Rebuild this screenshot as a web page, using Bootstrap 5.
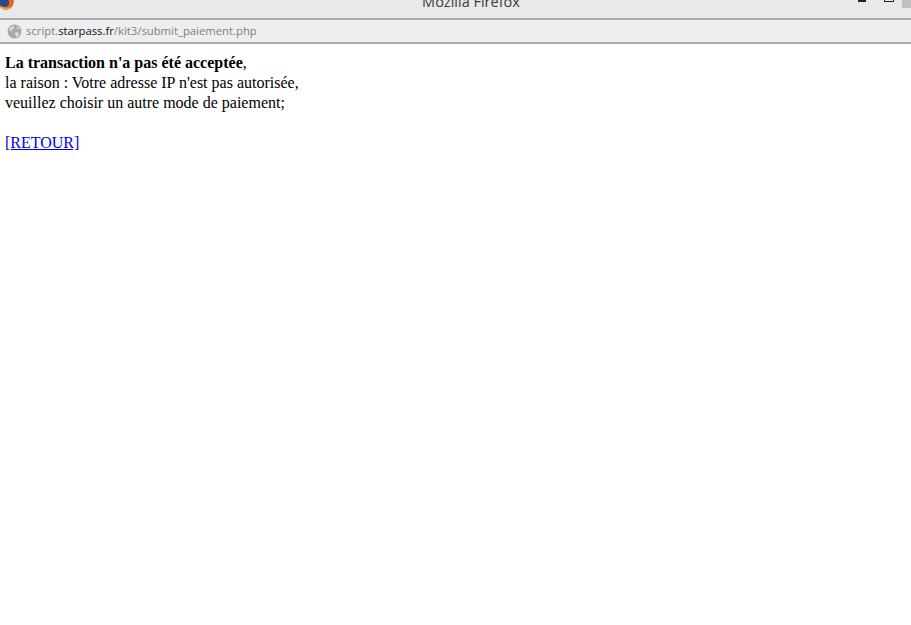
<!DOCTYPE html>
<html lang="fr">
<head>
    <meta charset="UTF-8">
    <meta name="viewport" content="width=device-width, initial-scale=1.0">
    <title>Mozilla Firefox</title>
    <link rel="stylesheet" href="https://cdn.jsdelivr.net/npm/bootstrap@5.3.0/dist/css/bootstrap.min.css">
    <style>
        body {
            background-color: #fff;
            overflow: hidden;
        }
        .win-title {
            height: 18px;
            background-color: #e9e9e9;
            overflow: hidden;
        }
        .win-logo {
            top: -7px;
            left: -3px;
        }
        .win-name {
            font: 14.5px/1 "Open Sans", "Liberation Sans", sans-serif;
            color: #3c3c3c;
            margin-top: -5px;
            margin-left: 31px;
        }
        .win-btns {
            top: 0;
            right: 0;
        }
        .btn-min {
            width: 8px;
            height: 2px;
            background-color: #222;
            margin-right: 18px;
        }
        .btn-max {
            width: 10px;
            height: 2px;
            border: 1px solid #222;
            border-top: 0;
            margin-right: 8px;
        }
        .btn-close-box {
            width: 9px;
            height: 8px;
            background-color: #c0c0c0;
        }
        .url-bar {
            height: 26px;
            background-color: #eeeeee;
            border-top: 2px solid #a4abb2;
            border-bottom: 2px solid #a4abb2;
            padding-left: 7px;
            font: 11.3px/1 "Open Sans", "Liberation Sans", sans-serif;
            color: #7d7d7d;
        }
        .url-host {
            color: #111;
        }
        .page-body {
            font: 16px/20px "Liberation Serif", serif;
            color: #000;
            padding: 9px 5px 0;
        }
        .page-body a {
            color: #0000ee;
        }
    </style>
</head>
<body>
    <div class="win-title position-relative d-flex justify-content-center">
        <svg class="win-logo position-absolute" width="18" height="18" viewBox="0 0 18 18">
            <circle cx="9" cy="9" r="7.5" fill="#2a4a8c"/>
            <path d="M9 1.5a7.5 7.5 0 1 1-7.3 9.2c1 2.4 3.4 4 6 3.7 3-.3 4.6-2.6 4.4-5-.2-2-1.6-3.4-3.100-4 .8-1.500 0-3 0-3.900z" fill="#e8641b"/>
            <path d="M2 12c1.500 3 4 4.500 7 4.500s5-1 6.500-3.500c-2 1.500-4 2-6.500 1.500S4 13 2 12z" fill="#f3a21f"/>
        </svg>
        <span class="win-name">Mozilla Firefox</span>
        <div class="win-btns position-absolute d-flex align-items-start">
            <div class="btn-min"></div>
            <div class="btn-max"></div>
            <div class="btn-close-box"></div>
        </div>
    </div>
    <div class="url-bar d-flex align-items-center gap-1">
        <svg width="15" height="15" viewBox="0 0 15 15" class="flex-shrink-0">
            <circle cx="7.500" cy="7.500" r="7" fill="#a9a9a9"/>
            <path d="M3 3.500l3-1.500 1.500 1-1 2-2 .5.500 2-1.500-.5-1.500-1.500zM8 8l3.500.5.500 2-2.500 3-1-2.500zM10 2.500l2.500 2-1.500 1-1.500-1.500z" fill="#dcdcdc"/>
        </svg>
        <span>script.<span class="url-host">starpass.fr</span>/kit3/submit_paiement.php</span>
    </div>
    <div class="page-body">
        <b>La transaction n'a pas été acceptée</b>,<br>
        la raison : Votre adresse IP n'est pas autorisée,<br>
        veuillez choisir un autre mode de paiement;<br>
        <br>
        <a href="#">[RETOUR]</a>
    </div>
    <script src="https://cdn.jsdelivr.net/npm/bootstrap@5.3.0/dist/js/bootstrap.bundle.min.js"></script>
</body>
</html>
